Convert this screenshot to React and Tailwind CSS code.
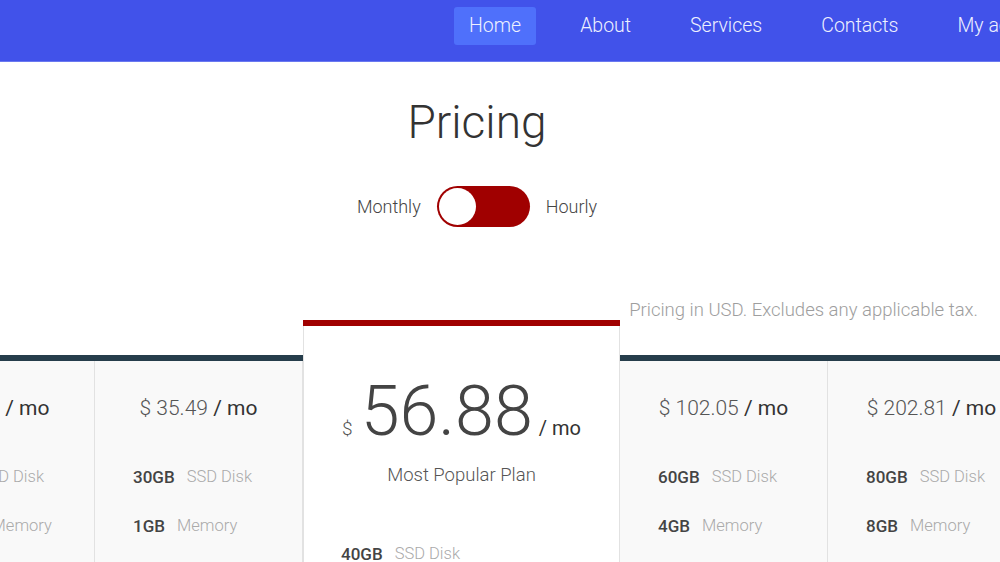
import { useState } from "react";

const plans = [
  { price: "17.99", disk: "20GB", memory: "512MB" },
  { price: "35.49", disk: "30GB", memory: "1GB" },
  { price: "56.88", disk: "40GB", memory: "2GB", popular: true },
  { price: "102.05", disk: "60GB", memory: "4GB" },
  { price: "202.81", disk: "80GB", memory: "8GB" },
];

const links = ["Home", "About", "Services", "Contacts", "My account"];

function SpecRow({ value, label }) {
  return (
    <div className="flex items-center gap-[12px] h-[49px]">
      <span className="text-[17px] font-medium text-[#444]">{value}</span>
      <span className="text-[16.5px] font-light text-[#aaa]">{label}</span>
    </div>
  );
}

function PlanColumn({ plan }) {
  return (
    <div className="w-[208px] shrink-0 mt-[35px]">
      <div className="h-[6px] bg-[#263d4b]" />
      <div className="h-[300px] bg-[#f9f9f9] border-r border-[#e2e2e2]">
        <div className="pt-[31px] text-center text-[21px] leading-[32px] whitespace-nowrap">
          <span className="font-light text-[#555]">$ {plan.price}</span>{" "}
          <span className="text-[#333]">/ mo</span>
        </div>
        <div className="pl-[38px] pt-[29px]">
          <SpecRow value={plan.disk} label="SSD Disk" />
          <SpecRow value={plan.memory} label="Memory" />
        </div>
      </div>
    </div>
  );
}

function PopularColumn({ plan }) {
  return (
    <div className="w-[317px] shrink-0">
      <div className="h-[6px] bg-[#a00000]" />
      <div className="h-[300px] bg-white border-x border-[#e2e2e2]">
        <div className="pt-[51px] flex items-baseline justify-center whitespace-nowrap">
          <span className="text-[19px] font-light text-[#555] mr-[8px]">$</span>
          <span className="text-[70px] leading-[68px] font-light text-[#444]">{plan.price}</span>
          <span className="text-[20px] text-[#333] ml-[6px]">/ mo</span>
        </div>
        <div className="text-center text-[18.5px] font-light text-[#555] mt-[17px]">
          Most Popular Plan
        </div>
        <div className="pl-[37px] pt-[40px]">
          <SpecRow value={plan.disk} label="SSD Disk" />
          <SpecRow value={plan.memory} label="Memory" />
        </div>
      </div>
    </div>
  );
}

export default function App() {
  const [hourly, setHourly] = useState(false);

  return (
    <div className="w-[1000px] h-[562px] overflow-hidden bg-white font-['Roboto',sans-serif]">
      <nav className="h-[62px] bg-[#4152ea] border-b border-[#6a78f0] flex items-start pt-[7px] pl-[454px] whitespace-nowrap">
        <ul className="flex items-center gap-[29px]">
          {links.map((link, i) => (
            <li
              key={link}
              className={
                "px-[15px] h-[38px] flex items-center rounded-[3px] text-[19.5px] font-light text-[#eef0ff] " +
                (i === 0 ? "bg-[#4f70fb]" : "")
              }
            >
              {link}
            </li>
          ))}
        </ul>
      </nav>

      <div className="w-[954px]">
        <h1 className="mt-[32px] text-center text-[46px] leading-[57px] font-light text-[#333]">Pricing</h1>
        <div className="mt-[35px] flex items-center justify-center gap-[16px] text-[18px] text-[#444] font-light">
          <span>Monthly</span>
          <button
            onClick={() => setHourly(!hourly)}
            className="w-[93px] h-[41px] rounded-full bg-[#a00000] p-[2px] flex items-center"
          >
            <span className="block w-[37px] h-[37px] rounded-full bg-white" />
          </button>
          <span>Hourly</span>
        </div>
      </div>

      <div className="mt-[73px] pr-[22px] text-right text-[18.5px] leading-[20px] font-light text-[#9e9e9e]">
        Pricing in USD. Excludes any applicable tax.
      </div>

      <div className="flex items-start ml-[-113px]">
        {plans.map((plan) =>
          plan.popular ? (
            <PopularColumn key={plan.price} plan={plan} />
          ) : (
            <PlanColumn key={plan.price} plan={plan} />
          )
        )}
      </div>
    </div>
  );
}
